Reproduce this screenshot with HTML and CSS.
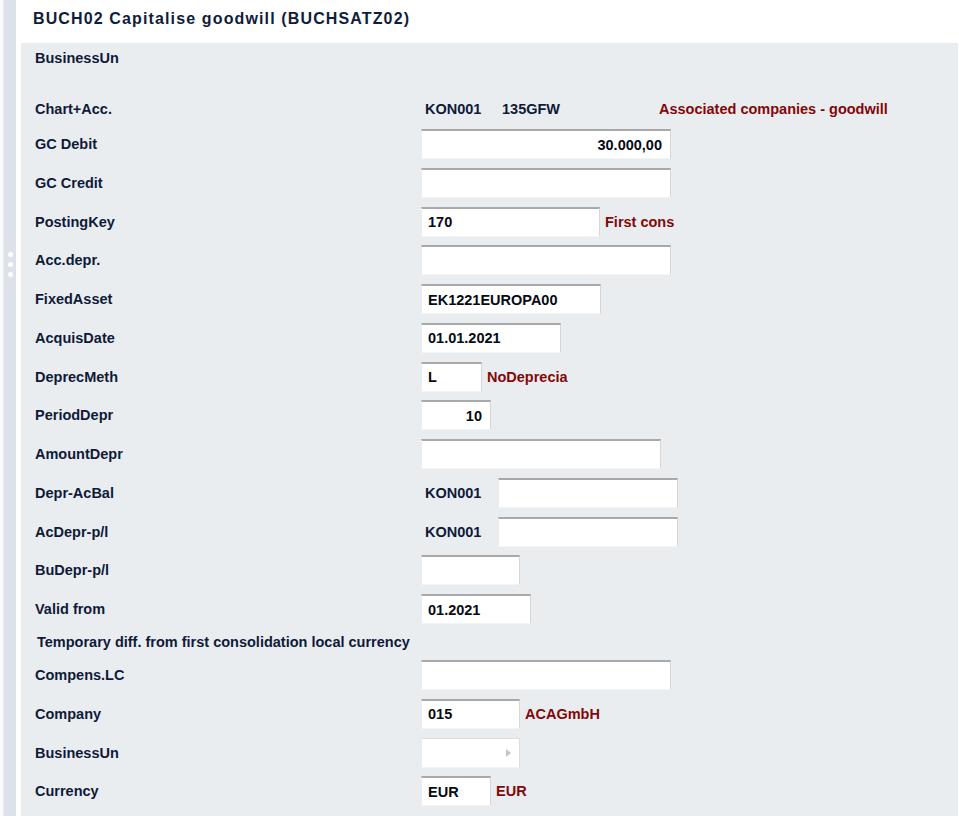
FILE: index.html
```html
<!DOCTYPE html>
<html>
<head>
<meta charset="utf-8">
<link rel="stylesheet" href="styles.css">
</head>
<body>
<div class="app">
  <div class="rail">
    <div class="rail-bar">
      <span class="dot"></span><span class="dot"></span><span class="dot"></span>
    </div>
  </div>
  <div class="main">
    <div class="header"><h1 class="title">BUCH02 Capitalise goodwill (BUCHSATZ02)</h1></div>
    <div class="panel">
      <div class="row"><div class="label">BusinessUn</div></div>
      <div class="row row-chart">
        <div class="label">Chart+Acc.</div>
        <div class="val">
          <span class="txt w77">KON001</span><span class="txt w157">135GFW</span><span class="red">Associated companies - goodwill</span>
        </div>
      </div>
      <div class="row"><div class="label">GC Debit</div><div class="val"><div class="field w250 right">30.000,00</div></div></div>
      <div class="row"><div class="label">GC Credit</div><div class="val"><div class="field w250"></div></div></div>
      <div class="row"><div class="label">PostingKey</div><div class="val"><div class="field w179">170</div><span class="red">First cons</span></div></div>
      <div class="row"><div class="label">Acc.depr.</div><div class="val"><div class="field w250"></div></div></div>
      <div class="row"><div class="label">FixedAsset</div><div class="val"><div class="field w180">EK1221EUROPA00</div></div></div>
      <div class="row"><div class="label">AcquisDate</div><div class="val"><div class="field w140">01.01.2021</div></div></div>
      <div class="row"><div class="label">DeprecMeth</div><div class="val"><div class="field w61">L</div><span class="red">NoDeprecia</span></div></div>
      <div class="row"><div class="label">PeriodDepr</div><div class="val"><div class="field w70 right">10</div></div></div>
      <div class="row"><div class="label">AmountDepr</div><div class="val"><div class="field w240"></div></div></div>
      <div class="row"><div class="label">Depr-AcBal</div><div class="val"><span class="txt w77">KON001</span><div class="field w180"></div></div></div>
      <div class="row"><div class="label">AcDepr-p/l</div><div class="val"><span class="txt w77">KON001</span><div class="field w180"></div></div></div>
      <div class="row"><div class="label">BuDepr-p/l</div><div class="val"><div class="field w99"></div></div></div>
      <div class="row"><div class="label">Valid from</div><div class="val"><div class="field w110">01.2021</div></div></div>
      <div class="row-section"><div class="section">Temporary diff. from first consolidation local currency</div></div>
      <div class="row"><div class="label">Compens.LC</div><div class="val"><div class="field w250"></div></div></div>
      <div class="row"><div class="label">Company</div><div class="val"><div class="field w99">015</div><span class="red">ACAGmbH</span></div></div>
      <div class="row"><div class="label">BusinessUn</div><div class="val"><div class="field w99 select"><span class="caret"></span></div></div></div>
      <div class="row"><div class="label">Currency</div><div class="val"><div class="field w70">EUR</div><span class="red">EUR</span></div></div>
    </div>
  </div>
</div>
</body>
</html>
```

FILE: styles.css
```css
html, body {
  margin: 0;
  padding: 0;
  height: 100%;
  background: #ffffff;
}
body {
  font-family: "Liberation Sans", Arial, sans-serif;
  font-weight: bold;
  font-size: 14.5px;
  color: #0e1a38;
  overflow: hidden;
}
.app {
  display: flex;
  height: 816px;
}
.rail {
  width: 21px;
  flex: none;
  display: flex;
  padding-left: 3px;
  box-sizing: border-box;
  background: linear-gradient(to right, #fafbfc 0, #fafbfc 3px, #ffffff 3px);
}
.rail-bar {
  width: 13px;
  background: #dde1ea;
  border-left: 1px solid #e8eaef;
  box-sizing: border-box;
  display: flex;
  flex-direction: column;
  align-items: center;
  padding-top: 252px;
  gap: 5px;
}
.dot {
  width: 5px;
  height: 5px;
  border-radius: 50%;
  background: #ffffff;
}
.main {
  flex: 1;
  display: flex;
  flex-direction: column;
  padding-right: 1px;
}
.header {
  height: 43px;
  background: #ffffff;
  display: flex;
  align-items: center;
  padding-left: 12px;
  flex: none;
}
.title {
  margin: 0;
  font-size: 16px;
  font-weight: bold;
  letter-spacing: 1.13px;
  color: #0f1d3c;
  padding-bottom: 6px;
}
.panel {
  flex: 1;
  background: #eaedf0;
  padding-left: 14px;
  display: flex;
  flex-direction: column;
  gap: 8.75px;
}
.row {
  height: 30px;
  display: flex;
  align-items: center;
  flex: none;
}
.row-chart {
  height: 38.5px;
  align-items: flex-end;
  padding-bottom: 3px;
  box-sizing: border-box;
}
.label {
  width: 386px;
  flex: none;
  line-height: 16px;
}
.val {
  display: flex;
  align-items: center;
  height: 100%;
}
.row-chart .val {
  height: auto;
  line-height: 16px;
}
.txt {
  display: inline-block;
  padding-left: 4px;
  box-sizing: border-box;
  color: #0e1a38;
}
.w77 { width: 77px; }
.w157 { width: 157px; }
.red {
  color: #820808;
  margin-left: 5px;
}
.row-chart .red { margin-left: 4px; }
.field {
  height: 30px;
  box-sizing: border-box;
  background: #ffffff;
  border-top: 2px solid #a9a9a9;
  border-left: 1px solid #ececec;
  border-right: 1px solid #d6d6d6;
  border-bottom: 1px solid #f4f4f4;
  padding: 0 7px 0 6px;
  display: flex;
  align-items: center;
  color: #050a14;
  position: relative;
}
.right { justify-content: flex-end; padding-right: 8px; }
.w250 { width: 250px; }
.w240 { width: 240px; }
.w180 { width: 180px; }
.w179 { width: 179px; }
.w140 { width: 140px; }
.w110 { width: 110px; }
.w99 { width: 99px; }
.w70 { width: 70px; }
.w61 { width: 61px; }
.select {
  border-top: 1px solid #dcdcdc;
  border-right: 1px solid #dedede;
  justify-content: flex-end;
  padding-right: 8px;
}
.caret {
  width: 0;
  height: 0;
  border-top: 4px solid transparent;
  border-bottom: 4px solid transparent;
  border-left: 5px solid #c4c4c4;
}
.row-section {
  height: 18.5px;
  display: flex;
  align-items: center;
  padding-left: 2px;
  flex: none;
}
.section {
  line-height: 16px;
}
```
